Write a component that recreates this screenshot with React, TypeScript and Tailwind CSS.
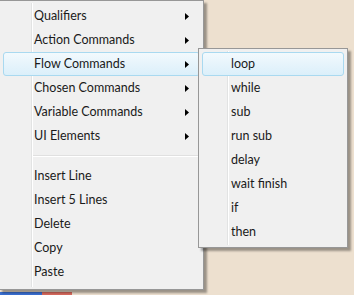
import React from "react";

const mainItems: { label: string; sub?: boolean; active?: boolean; sep?: boolean }[] = [
  { label: "Qualifiers", sub: true },
  { label: "Action Commands", sub: true },
  { label: "Flow Commands", sub: true, active: true },
  { label: "Chosen Commands", sub: true },
  { label: "Variable Commands", sub: true },
  { label: "UI Elements", sub: true },
  { label: "", sep: true },
  { label: "Insert Line" },
  { label: "Insert 5 Lines" },
  { label: "Delete" },
  { label: "Copy" },
  { label: "Paste" },
];

const flowItems = ["loop", "while", "sub", "run sub", "delay", "wait finish", "if", "then"];

function Arrow() {
  return (
    <svg width="4" height="7" viewBox="0 0 4 7" className="shrink-0">
      <path d="M0 0 L4 3.5 L0 7 Z" fill="#000" />
    </svg>
  );
}

function Highlight() {
  return (
    <div className="absolute inset-x-[3px] inset-y-0 rounded-[3px] border border-[#a9d9f0] bg-gradient-to-b from-[#f2f9fd] to-[#dbeffa]" />
  );
}

export default function App() {
  return (
    <div
      className="relative w-[354px] h-[295px] overflow-hidden bg-[#ede0cf] flex flex-col"
      style={{ fontFamily: '"Segoe UI", Lato, "Noto Sans", sans-serif' }}
    >
      {/* Main context menu */}
      <div className="relative ml-[-1px] w-[205px] h-[290px] border border-[#979797] bg-[#f0f0f0] shadow-[3px_3px_2px_rgba(0,0,0,0.35)] py-[3px]">
        {/* gutter line */}
        <div className="absolute top-[2px] bottom-[2px] left-[31px] w-[2px] border-l border-[#e2e3e3] bg-white" />
        {mainItems.map((it, i) =>
          it.sep ? (
            <div key={i} className="relative h-[16px] flex items-center pl-[33px] pr-[3px]">
              <div className="w-full h-[2px] border-t border-[#e0e0e0] bg-white" />
            </div>
          ) : (
            <div key={i} className="relative h-[24px] flex items-center">
              {it.active && <Highlight />}
              <span className="relative pl-[34px] flex-1 text-[12.5px] text-[#1a1a1a] leading-none">{it.label}</span>
              {it.sub && (
                <span className="relative pr-[14px]">
                  <Arrow />
                </span>
              )}
            </div>
          )
        )}
      </div>

      {/* bottom taskbar strip */}
      <div className="flex h-[3px] mt-auto">
        <div className="w-[42px] bg-[#3a6fd0]" />
        <div className="w-[30px] bg-[#d86a5e]" />
        <div className="flex-1" />
      </div>

      {/* Flow Commands submenu */}
      <div className="absolute left-[198px] top-[48px] w-[150px] h-[200px] border border-[#979797] bg-[#f0f0f0] shadow-[3px_3px_2px_rgba(0,0,0,0.35)] py-[3px]">
        <div className="absolute top-[2px] bottom-[2px] left-[28px] w-[2px] border-l border-[#e2e3e3] bg-white" />
        {flowItems.map((f, i) => (
          <div key={i} className="relative h-[24px] flex items-center">
            {i === 0 && <Highlight />}
            <span className="relative pl-[32px] text-[12.5px] text-[#1a1a1a] leading-none">{f}</span>
          </div>
        ))}
      </div>
    </div>
  );
}
